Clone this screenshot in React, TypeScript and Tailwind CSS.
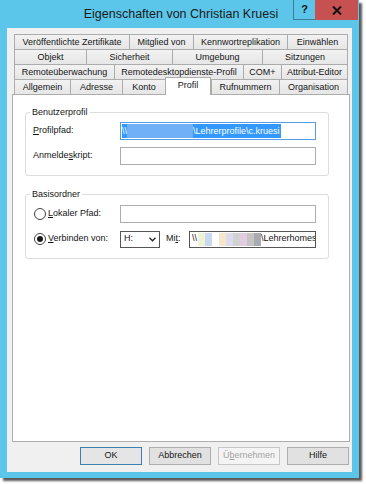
import React from "react";

type TabDef = { label: string; w: number; selected?: boolean };

const rows: TabDef[][] = [
  [
    { label: "Veröffentlichte Zertifikate", w: 115 },
    { label: "Mitglied von", w: 64 },
    { label: "Kennwortreplikation", w: 94 },
    { label: "Einwählen", w: 61 },
  ],
  [
    { label: "Objekt", w: 72 },
    { label: "Sicherheit", w: 86 },
    { label: "Umgebung", w: 90 },
    { label: "Sitzungen", w: 86 },
  ],
  [
    { label: "Remoteüberwachung", w: 100 },
    { label: "Remotedesktopdienste-Profil", w: 129 },
    { label: "COM+", w: 38 },
    { label: "Attribut-Editor", w: 67 },
  ],
  [
    { label: "Allgemein", w: 56 },
    { label: "Adresse", w: 52 },
    { label: "Konto", w: 43 },
    { label: "Profil", w: 46, selected: true },
    { label: "Rufnummern", w: 68 },
    { label: "Organisation", w: 69 },
  ],
];

// verpixelter Servername
const blurBlocks = ["#eef3d8", "#c9d9f2", "#ffffff", "#f5e6cc", "#dcdcee", "#d2d2d2", "#e3cbe0", "#c4c4c4", "#a9abb0"];

function Tab({ t, last }: { t: TabDef; last: boolean }) {
  if (t.selected) {
    return (
      <div
        style={{ width: t.w }}
        className="relative z-10 h-[18px] -mb-[1px] border-t border-l border-r border-[#acacac] bg-white flex items-start justify-center pt-[2px] leading-[11px]"
      >
        {t.label}
      </div>
    );
  }
  return (
    <div
      style={{ width: t.w }}
      className={`h-[15px] border-t border-l border-[#acacac] bg-gradient-to-b from-[#f2f2f2] to-[#e6e6e6] flex items-center justify-center leading-[11px] ${last ? "border-r" : ""}`}
    >
      {t.label}
    </div>
  );
}

function Btn({ children, primary, disabled }: { children: React.ReactNode; primary?: boolean; disabled?: boolean }) {
  return (
    <div
      className={`w-[62px] h-[18px] flex items-center justify-center border ${
        primary
          ? "border-[#3c7fb1] bg-[#e5e5e5]"
          : disabled
          ? "border-[#c6c6c6] bg-[#f4f4f4] text-[#a3a3a3]"
          : "border-[#adadad] bg-[#e1e1e1]"
      }`}
    >
      {children}
    </div>
  );
}

export default function App() {
  return (
    <div className="w-[366px] h-[484px] bg-white font-['Liberation_Sans',Arial,sans-serif] text-[9px] text-[#151515] overflow-hidden">
      <div className="w-[359px] h-[478px] bg-[#5cc6ea] flex flex-col shadow-[3px_3px_2px_rgba(0,0,0,0.65)] relative">
        {/* Title bar */}
        <div className="h-[28px] flex items-center justify-center text-[12.5px] text-[#1a1a1a] pl-[3px]">
          Eigenschaften von Christian Kruesi
        </div>
        <div className="absolute top-0 right-[1px] flex h-[20px]">
          <div className="w-[22px] h-[20px] border-l border-b border-[#3d7d9c] flex items-center justify-center text-[11px] font-bold text-[#111]">
            ?
          </div>
          <div className="w-[43px] h-[20px] bg-[#c75050] flex items-center justify-center">
            <svg width="10" height="9" viewBox="0 0 10 9">
              <path d="M1 0.5 L9 8.5 M9 0.5 L1 8.5" stroke="#111" strokeWidth="2" />
            </svg>
          </div>
        </div>

        {/* Client area */}
        <div className="mx-[7px] h-[444px] bg-[#f0f0f0] pt-[6px] pl-[5px] pr-[2px] flex flex-col">
          {/* Tabs */}
          <div className="mx-[2px] flex flex-col">
            {rows.map((r, i) => (
              <div key={i} className="flex items-end h-[15px]">
                {r.map((t, j) => (
                  <Tab key={t.label} t={t} last={j === r.length - 1} />
                ))}
              </div>
            ))}
          </div>

          {/* Panel */}
          <div className="h-[348px] border border-[#adadad] bg-white pl-[12px]">
            <fieldset className="mt-[12px] w-[304px] border border-[#dcdcdc] rounded-[3px] p-0">
              <legend className="ml-[4px] px-[2px] leading-[11px]">Benutzerprofil</legend>
              <div className="pl-[7px] pt-[4px] pb-[10px] flex flex-col gap-[7px]">
                <div className="flex items-center h-[18px]">
                  <div className="w-[87px]">
                    <span className="underline">P</span>rofilpfad:
                  </div>
                  <div className="w-[196px] h-[18px] border border-[#569de5] flex items-center pl-[1px]">
                    <div className="h-[14px] bg-[#3399ff] text-white flex items-center pr-[1px] leading-[11px]">
                      <span>\\</span>
                      <span className="w-[66px] h-[14px] bg-[#6fb0f7]" />
                      <span>\Lehrerprofile\c.kruesi</span>
                    </div>
                  </div>
                </div>
                <div className="flex items-center h-[18px]">
                  <div className="w-[87px]">
                    Anmelde<span className="underline">s</span>kript:
                  </div>
                  <div className="w-[196px] h-[18px] border border-[#abadb3] bg-white" />
                </div>
              </div>
            </fieldset>

            <fieldset className="mt-[13px] w-[304px] border border-[#dcdcdc] rounded-[3px] p-0">
              <legend className="ml-[4px] px-[2px] leading-[11px]">Basisordner</legend>
              <div className="pl-[8px] pt-[5px] pb-[10px] flex flex-col gap-[7px]">
                <div className="flex items-center h-[18px]">
                  <div className="w-[86px] flex items-center">
                    <span className="w-[12px] h-[12px] rounded-full border border-[#444] bg-white mr-[2px]" />
                    <span>
                      <span className="underline">L</span>okaler Pfad:
                    </span>
                  </div>
                  <div className="w-[196px] h-[18px] border border-[#abadb3] bg-white" />
                </div>
                <div className="flex items-center h-[18px]">
                  <div className="w-[86px] flex items-center">
                    <span className="w-[12px] h-[12px] rounded-full border border-[#444] bg-white mr-[2px] flex items-center justify-center">
                      <span className="w-[6px] h-[6px] rounded-full bg-[#1a1a1a]" />
                    </span>
                    <span>
                      <span className="underline">V</span>erbinden von:
                    </span>
                  </div>
                  <div className="w-[40px] h-[17px] border border-[#555] bg-white flex items-center justify-between pl-[3px] pr-[3px]">
                    <span>H:</span>
                    <svg width="7" height="5" viewBox="0 0 7 5">
                      <path d="M0.5 0.8 L3.5 3.8 L6.5 0.8" stroke="#222" strokeWidth="1.3" fill="none" />
                    </svg>
                  </div>
                  <div className="w-[29px] pl-[6px]">
                    Mi<span className="underline">t</span>:
                  </div>
                  <div className="w-[127px] h-[17px] border border-[#555] bg-white flex items-center pl-[2px] overflow-hidden whitespace-nowrap">
                    <span>\\</span>
                    <span className="flex h-[13px] ml-[1px] shrink-0">
                      {blurBlocks.map((c, i) => (
                        <span key={i} className="w-[7px] h-[13px]" style={{ background: c }} />
                      ))}
                    </span>
                    <span>\Lehrerhomes</span>
                  </div>
                </div>
              </div>
            </fieldset>
          </div>

          {/* Buttons */}
          <div className="mt-[5px] flex justify-end gap-[7px] pr-[1px]">
            <Btn primary>OK</Btn>
            <Btn>Abbrechen</Btn>
            <Btn disabled>
              Ü<span className="underline">b</span>ernehmen
            </Btn>
            <Btn>Hilfe</Btn>
          </div>
        </div>
      </div>
    </div>
  );
}
